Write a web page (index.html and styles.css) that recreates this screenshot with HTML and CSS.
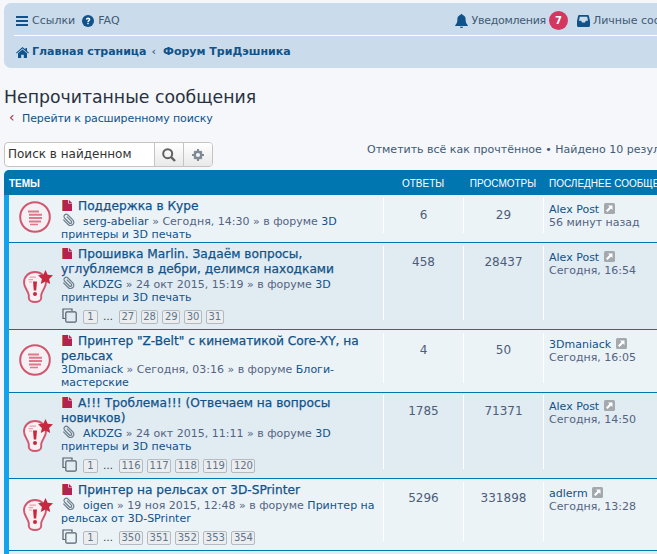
FILE: index.html
```html
<!DOCTYPE html>
<html lang="ru">
<head>
<meta charset="utf-8">
<title>Непрочитанные сообщения</title>
<link rel="stylesheet" href="styles.css">
</head>
<body>
<svg class="defs" width="0" height="0" aria-hidden="true">
  <defs>
    <symbol id="file" viewBox="0 0 10 11"><path d="M0 0H6.200V3.600H10V11H0Z" fill="#b3234f"/><path d="M7 0L10 2.900H7Z" fill="#b3234f"/><path d="M0 0H1V11H0Z" fill="#c2703a"/></symbol>
    <symbol id="clip" viewBox="0 0 14 14"><path transform="translate(14 0) scale(-1 1)" d="M12.600 6.600L7.400 11.800C5.900 13.300 3.700 13.300 2.300 11.900C.900 10.500 .900 8.300 2.400 6.800L7.600 1.600C8.600.600 10.100.600 11.100 1.600C12.100 2.600 12.100 4.100 11.100 5.100L6 10.200C5.400 10.800 4.600 10.800 4 10.200C3.400 9.600 3.400 8.800 4 8.200L8.800 3.400" fill="none" stroke="#6b7d8c" stroke-width="1.300"/></symbol>
    <symbol id="read" viewBox="0 0 32 32"><circle cx="16" cy="16" r="14.800" fill="#f4f0f3" stroke="#d1576f" stroke-width="2"/><path d="M9 9.500H20V11.500H9ZM10 12.800H23V14.800H10ZM10 16.100H23V18.100H10ZM10 19.400H22V21.400H10ZM11 22.700H19V24.200H11Z" fill="#dc7a8c"/></symbol>
    <symbol id="hot" viewBox="0 0 30 33"><path d="M12 2C5.800 2 1 6.600 1 12.400C1 17.500 4.800 20.100 5.800 25V28C5.800 30.400 8.600 32 12 32C15.400 32 18.200 30.400 18.200 28V25C19.200 20.100 23 17.500 23 12.400C23 6.600 18.200 2 12 2Z" fill="#f7f1f3" stroke="#d1576f" stroke-width="1.900"/><path d="M6.500 6.500H13V7.700H6.500ZM5.500 9H10V10.200H5.500ZM6 11.500H9V12.500H6Z" fill="#e8a3af"/><path d="M10 11.500H14L13.200 20.500H10.800Z" fill="#c8283f"/><circle cx="12" cy="24" r="2" fill="#c8283f"/><path d="M22.500 0L24.700 4.700L30 5.300L26.100 8.900L27.200 14L22.500 11.400L17.800 14L18.900 8.900L15 5.300L20.300 4.700Z" fill="#c8283f"/></symbol>
    <symbol id="pages" viewBox="0 0 15 15"><path d="M3 10.500H1V1H10V3" fill="none" stroke="#53616d" stroke-width="1.200"/><rect x="3.800" y="3.800" width="10.400" height="10.400" rx="1.200" fill="none" stroke="#53616d" stroke-width="1.200"/></symbol>
    <symbol id="goto" viewBox="0 0 11 11"><rect width="11" height="11" rx="1.500" fill="#a3a9ad"/><path d="M4 2.500H8.500V7L7 5.500L3.500 9L2 7.500L5.500 4Z" fill="#fff"/></symbol>
  </defs>
</svg>
<div class="page">
  <nav class="navbar">
    <div class="nav-top">
      <div class="nav-group">
        <a class="nav-link"><svg class="ic-bars" viewBox="0 0 12 12"><path d="M0 1H12V3H0ZM0 5H12V7H0ZM0 9H12V11H0Z" fill="#105289"/></svg>Ссылки</a>
        <a class="nav-link"><svg class="ic-help" viewBox="0 0 12 12"><circle cx="6" cy="6" r="6" fill="#105289"/><path d="M3.800 4.600C3.900 3.300 4.900 2.600 6.100 2.600C7.400 2.600 8.300 3.400 8.300 4.400C8.300 5.900 6.700 5.800 6.700 7.200H5.300C5.300 5.300 6.800 5.300 6.800 4.500C6.800 4.100 6.500 3.900 6.100 3.900C5.600 3.900 5.300 4.200 5.200 4.800ZM5.300 7.900H6.700V9.300H5.300Z" fill="#fff"/></svg>FAQ</a>
      </div>
      <div class="nav-group nav-right">
        <a class="nav-link"><svg class="ic-bell" viewBox="0 0 13 14"><path d="M6.500 0C7.100 0 7.500.400 7.500 1C9.600 1.400 10.600 3 10.600 5C10.600 8.500 11.300 9.700 12.800 11.200V12H.200V11.200C1.700 9.700 2.400 8.500 2.400 5C2.400 3 3.400 1.400 5.500 1C5.500.400 5.900 0 6.500 0ZM5 12.700H8C8 13.500 7.300 14 6.500 14C5.700 14 5 13.500 5 12.700Z" fill="#105289"/></svg><span class="nav-tight">Уведомления</span><span class="badge">7</span></a>
        <a class="nav-link"><svg class="ic-inbox" viewBox="0 0 13 12"><path d="M2.500 0H10.500C11.300 0 11.800.500 12 1.200L13 6V10.500C13 11.400 12.400 12 11.500 12H1.500C.600 12 0 11.400 0 10.500V6L1 1.200C1.200.500 1.700 0 2.500 0ZM2.800 1.700L2 5.800H4.200L5 7.500H8L8.800 5.800H11L10.200 1.700Z" fill="#105289"/></svg>Личные сообщения</a>
      </div>
    </div>
    <div class="nav-crumbs">
      <svg class="ic-home" viewBox="0 0 13 11"><path d="M6.500 0L9.500 2.600V1H11V3.900L13 5.700L12.300 6.500L6.500 1.500L.700 6.500L0 5.700ZM6.500 2.500L11 6.300V11H7.800V7.800H5.200V11H2V6.300Z" fill="#105289"/></svg>
      <b>Главная страница</b><span class="crumb-sep">‹</span><b>Форум ТриДэшника</b>
    </div>
  </nav>

  <h2 class="page-title">Непрочитанные сообщения</h2>
  <p class="back-link"><span class="back-arrow">‹</span>Перейти к расширенному поиску</p>

  <div class="action-bar">
    <div class="search-box">
      <span class="search-input">Поиск в найденном</span>
      <span class="search-btn"><svg class="ic-search" viewBox="0 0 14 14"><circle cx="5.700" cy="5.700" r="4.500" fill="none" stroke="#606060" stroke-width="2"/><path d="M9 9L13 13" stroke="#606060" stroke-width="2.400"/></svg></span>
      <span class="search-btn gear-btn"><svg class="ic-gear" viewBox="0 0 12 12"><circle cx="6" cy="6" r="3.300" fill="none" stroke="#7f8a94" stroke-width="2.400"/><path d="M5 0H7V2H5ZM5 10H7V12H5ZM0 5H2V7H0ZM10 5H12V7H10ZM1.500 3L3 1.500L4.200 2.700L2.700 4.200ZM9 1.500L10.500 3L9.300 4.200L7.800 2.700ZM1.500 9L2.700 7.800L4.200 9.300L3 10.500ZM10.500 9L9 10.500L7.800 9.300L9.300 7.800Z" fill="#7f8a94"/></svg></span>
    </div>
    <div class="action-text">Отметить всё как прочтённое • Найдено 10 результатов</div>
  </div>

  <section class="forumbg">
    <header class="list-head">
      <div class="col-topic">ТЕМЫ</div>
      <div class="col-num">ОТВЕТЫ</div>
      <div class="col-num">ПРОСМОТРЫ</div>
      <div class="col-last">ПОСЛЕДНЕЕ СООБЩЕНИЕ</div>
    </header>
    <div class="rows">
      <article class="row row-read">
        <svg class="status st-read"><use href="#read"/></svg>
        <div class="topic">
          <a class="topic-title"><svg class="ic-file"><use href="#file"/></svg>Поддержка в Куре</a>
          <div class="topic-meta has-clip"><svg class="ic-clip"><use href="#clip"/></svg><span class="author">serg-abeliar</span> » Сегодня, 14:30 » в форуме <span class="author">3D принтеры и 3D печать</span></div>
        </div>
        <div class="num">6</div><div class="num">29</div>
        <div class="last"><div class="last-name">Alex Post <svg class="ic-goto"><use href="#goto"/></svg></div><div>56 минут назад</div></div>
      </article>

      <article class="row row-even">
        <svg class="status st-hot"><use href="#hot"/></svg>
        <div class="topic">
          <a class="topic-title"><svg class="ic-file"><use href="#file"/></svg>Прошивка Marlin. Задаём вопросы, углубляемся в дебри, делимся находками</a>
          <div class="topic-meta has-clip"><svg class="ic-clip"><use href="#clip"/></svg><span class="author">AKDZG</span> » 24 окт 2015, 15:19 » в форуме <span class="author">3D принтеры и 3D печать</span></div>
          <div class="pagination"><svg class="ic-pages"><use href="#pages"/></svg><span class="pg">1</span><span class="dots">…</span><span class="pg">27</span><span class="pg">28</span><span class="pg">29</span><span class="pg">30</span><span class="pg">31</span></div>
        </div>
        <div class="num">458</div><div class="num">28437</div>
        <div class="last"><div class="last-name">Alex Post <svg class="ic-goto"><use href="#goto"/></svg></div><div>Сегодня, 16:54</div></div>
      </article>

      <article class="row row-read">
        <svg class="status st-read"><use href="#read"/></svg>
        <div class="topic">
          <a class="topic-title"><svg class="ic-file"><use href="#file"/></svg>Принтер "Z-Belt" с кинематикой Core-XY, на рельсах</a>
          <div class="topic-meta"><span class="author">3Dmaniack</span> » Сегодня, 03:16 » в форуме <span class="author">Блоги-мастерские</span></div>
        </div>
        <div class="num">4</div><div class="num">50</div>
        <div class="last"><div class="last-name">3Dmaniack <svg class="ic-goto"><use href="#goto"/></svg></div><div>Сегодня, 16:05</div></div>
      </article>

      <article class="row row-even row-tight">
        <svg class="status st-hot"><use href="#hot"/></svg>
        <div class="topic">
          <a class="topic-title"><svg class="ic-file"><use href="#file"/></svg>А!!! Троблема!!! (Отвечаем на вопросы новичков)</a>
          <div class="topic-meta has-clip"><svg class="ic-clip"><use href="#clip"/></svg><span class="author">AKDZG</span> » 24 окт 2015, 11:11 » в форуме <span class="author">3D принтеры и 3D печать</span></div>
          <div class="pagination"><svg class="ic-pages"><use href="#pages"/></svg><span class="pg">1</span><span class="dots">…</span><span class="pg">116</span><span class="pg">117</span><span class="pg">118</span><span class="pg">119</span><span class="pg">120</span></div>
        </div>
        <div class="num">1785</div><div class="num">71371</div>
        <div class="last"><div class="last-name">Alex Post <svg class="ic-goto"><use href="#goto"/></svg></div><div>Сегодня, 14:50</div></div>
      </article>

      <article class="row">
        <svg class="status st-hot"><use href="#hot"/></svg>
        <div class="topic">
          <a class="topic-title"><svg class="ic-file"><use href="#file"/></svg>Принтер на рельсах от 3D-SPrinter</a>
          <div class="topic-meta has-clip"><svg class="ic-clip"><use href="#clip"/></svg><span class="author">oigen</span> » 19 ноя 2015, 12:48 » в форуме <span class="author">Принтер на рельсах от 3D-SPrinter</span></div>
          <div class="pagination"><svg class="ic-pages"><use href="#pages"/></svg><span class="pg">1</span><span class="dots">…</span><span class="pg">350</span><span class="pg">351</span><span class="pg">352</span><span class="pg">353</span><span class="pg">354</span></div>
        </div>
        <div class="num">5296</div><div class="num">331898</div>
        <div class="last"><div class="last-name">adlerm <svg class="ic-goto"><use href="#goto"/></svg></div><div>Сегодня, 13:28</div></div>
      </article>
      <div class="row row-even row-next"></div>
    </div>
  </section>
</div>
</body>
</html>
```

FILE: styles.css
```css
html, body { margin: 0; padding: 0; }
html { height: 100%; overflow: hidden; }
body {
  height: 554px;
  overflow: hidden;
  background: #f5f7fa;
  color: #536482;
  font: 11px/14px "DejaVu Sans", Verdana, sans-serif;
}
.defs { position: absolute; }
.page { width: 1000px; padding: 3px 0 0 4px; }

.navbar {
  height: 65px;
  box-sizing: border-box;
  background: #cadceb;
  border-radius: 7px;
  padding: 0 10px;
  color: #105289;
}
.nav-top {
  height: 29px;
  padding: 3px 0 0 2px;
  display: flex;
  align-items: center;
  border-bottom: 1px solid #fff;
}
.nav-group { display: flex; align-items: center; gap: 7px; }
.nav-right { margin-left: 335px; gap: 9px; }
.nav-link { display: flex; align-items: center; color: #3f5a74; white-space: nowrap; }
.nav-tight { letter-spacing: -0.27px; }
.ic-bars { width: 12px; height: 12px; margin-right: 4px; }
.ic-help { width: 12px; height: 12px; margin-right: 4px; }
.ic-bell { width: 13px; height: 14px; margin-right: 4px; }
.ic-inbox { width: 13px; height: 12px; margin-right: 3px; }
.badge {
  width: 19px;
  height: 19px;
  margin-left: 3px;
  border-radius: 50%;
  background: #d3365f;
  color: #fff;
  font-weight: bold;
  font-size: 10px;
  line-height: 19px;
  text-align: center;
}
.nav-crumbs {
  display: flex;
  align-items: center;
  height: 32px;
  padding-left: 2px;
  white-space: nowrap;
}
.nav-crumbs b { color: #105289; font-weight: bold; }
.ic-home { width: 13px; height: 11px; margin-right: 3px; }
.crumb-sep { margin: 0 7px 0 5px; font-weight: bold; color: #4a6b8a; }

.page-title {
  margin: 18px 0 0;
  font-size: 17.300px;
  line-height: 22px;
  font-weight: normal;
  color: #28313f;
}
.back-link { margin: 2px 0 0; padding-left: 5px; color: #105289; letter-spacing: -0.1px; white-space: nowrap; }
.back-arrow { display: inline-block; width: 13px; color: #a5283f; font-size: 14px; }

.action-bar { display: flex; align-items: flex-start; margin-top: 16px; }
.search-box {
  display: flex;
  height: 25px;
  width: 209px;
  box-sizing: border-box;
  background: #fff;
  border: 1px solid #c7c3bf;
  border-radius: 4px;
  overflow: hidden;
  flex: none;
}
.search-input { flex: 1; padding-left: 3px; font-size: 12px; line-height: 23px; color: #333; white-space: nowrap; }
.search-btn {
  width: 28px;
  display: flex;
  align-items: center;
  justify-content: center;
  background: linear-gradient(#fff, #e9e9e9);
  border-left: 1px solid #c7c3bf;
  flex: none;
}
.ic-search { width: 14px; height: 14px; }
.ic-gear { width: 12px; height: 12px; }
.action-text { margin: 1px 0 0 154px; white-space: nowrap; line-height: 14px; color: #3f5a74; }

.forumbg {
  margin-top: 3px;
  background: #12a3eb;
  border-radius: 7px 7px 0 0;
  padding: 0 0 0 5px;
  width: 100%;
}
.list-head {
  display: grid;
  grid-template-columns: 374px 80px 80px 1fr;
  height: 25px;
  box-sizing: border-box;
  margin-left: -5px;
  padding: 3px 0 0 5px;
  align-items: center;
  background: #0076b1;
  border-radius: 5px 5px 0 0;
  color: #fff;
  font: 10px/14px "Liberation Sans", Arial, sans-serif;
  white-space: nowrap;
}
.col-topic { font-weight: bold; }
.col-num { text-align: center; }
.col-last { padding-left: 6px; }
.rows { display: flex; flex-direction: column; gap: 1px; background: #0076b1; }
.row {
  display: grid;
  grid-template-columns: 52px 322px 80px 80px 1fr;
  padding: 3px 0;
  background: #ecf3f7;
}
.row-even { background: #e1ebf2; }
.row-tight { padding-top: 2px; }
.row-next { height: 40px; }
.status { align-self: center; }
.st-read { width: 32px; height: 32px; margin: -3px 0 0 10px; }
.st-hot { width: 30px; height: 33px; margin-left: 14px; }
.topic { padding: 1px 2px 0 0; min-width: 0; }
.topic-title {
  display: block;
  color: #105289;
  font-size: 12.200px;
  line-height: 15px;
  -webkit-text-stroke: 0.25px #105289;
}
.ic-file { width: 10px; height: 11px; margin: 0 6px 0 1px; vertical-align: -1px; }
.topic-meta { line-height: 13px; margin-top: -1px; }
.has-clip { margin-bottom: -2px; }
.author { color: #105289; }
.ic-clip { width: 13px; height: 14px; margin: 0 8px 0 1px; vertical-align: -2px; }
.pagination {
  display: flex;
  align-items: flex-end;
  margin: 6px 0 0;
  height: 18px;
  color: #5c758c;
  font-size: 10px;
}
.ic-pages { width: 15px; height: 15px; margin: 0 6px 0 1px; align-self: flex-start; flex: none; }
.pg {
  min-width: 10px;
  padding: 0 1.500px;
  height: 12px;
  line-height: 12px;
  border: 1px solid #b4bac0;
  border-radius: 2px;
  background: #ecedee;
  text-align: center;
  margin: 0 4px 2px 0;
}
.dots { width: 13px; margin: 0 3px 2px 1px; color: #333; }
.num {
  border-left: 1px solid #fff;
  padding-top: 6px;
  margin-bottom: 6px;
  text-align: center;
  font-size: 12px;
  line-height: 20px;
  color: #4c5d77;
}
.row-read .num { padding-top: 7px; }
.last {
  border-left: 1px solid #fff;
  margin-bottom: 6px;
  padding: 5px 0 0 5px;
  line-height: 13px;
  white-space: nowrap;
}
.last-name { color: #105289; }
.ic-goto { width: 11px; height: 11px; margin-left: 1px; vertical-align: -1px; }
```
